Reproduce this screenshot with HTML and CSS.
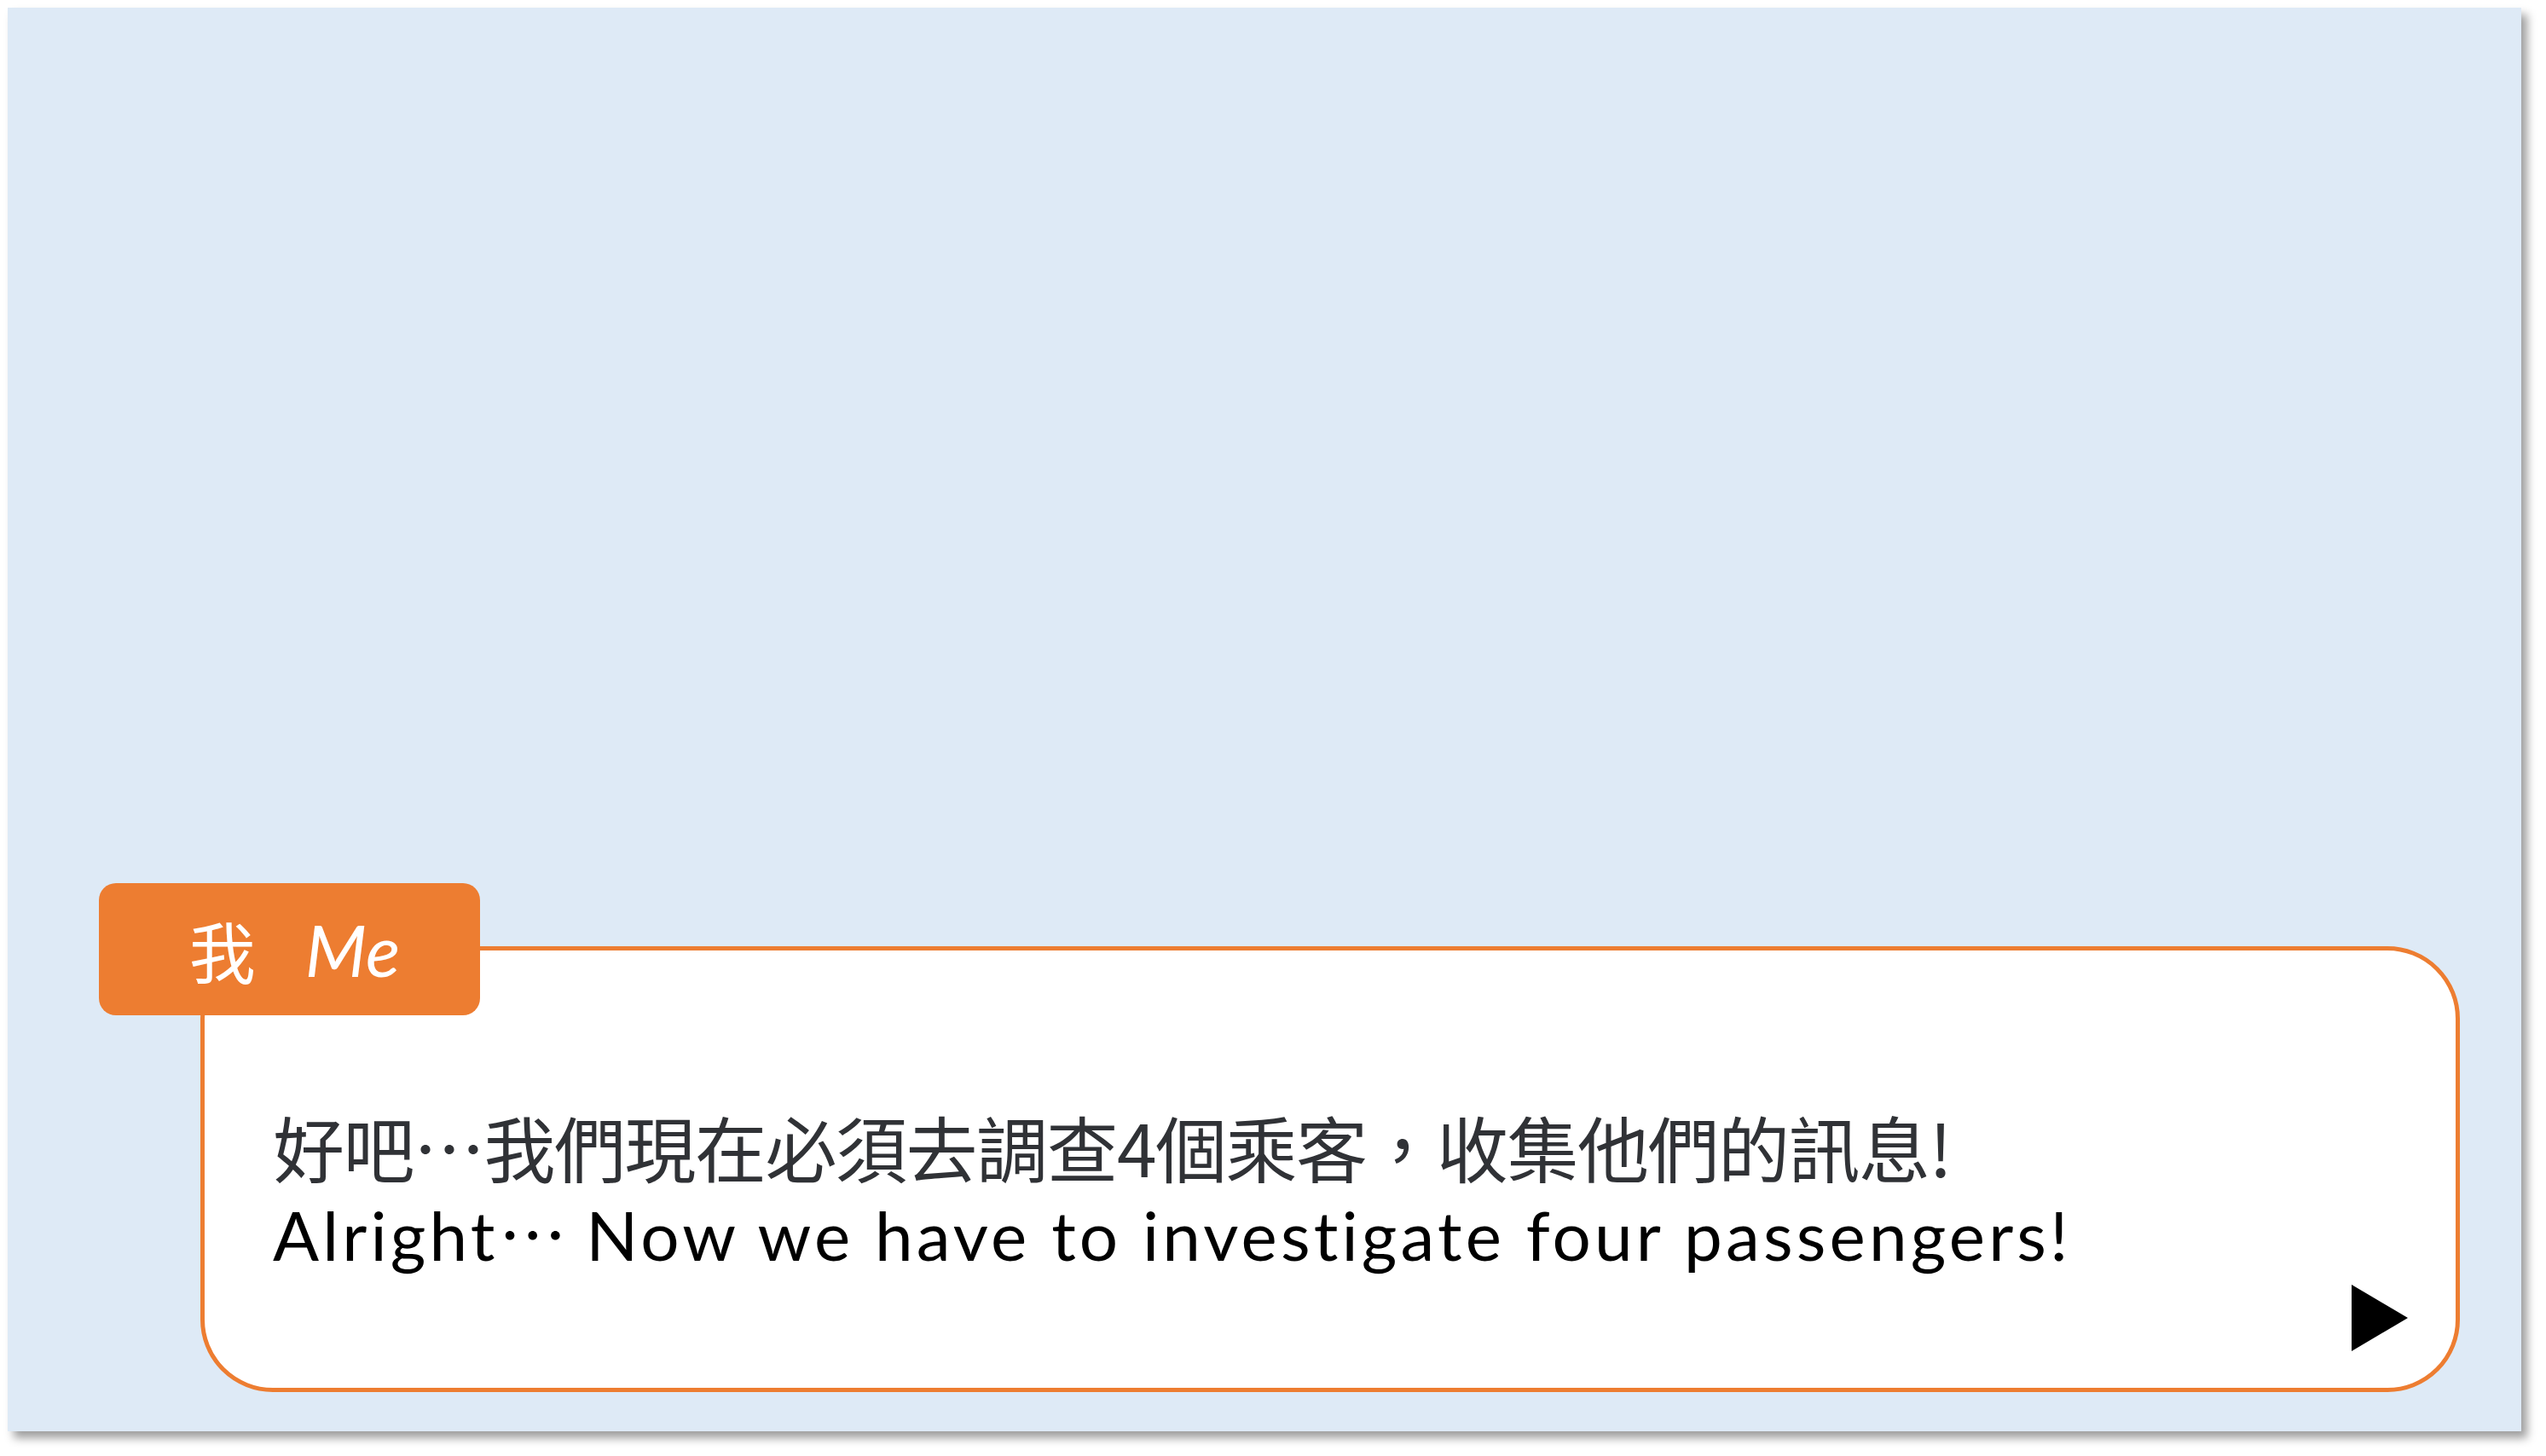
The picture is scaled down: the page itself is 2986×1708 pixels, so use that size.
FILE: index.html
```html
<!DOCTYPE html>
<html lang="zh-Hant">
<head>
<meta charset="utf-8">
<title>Dialogue</title>
<link rel="stylesheet" href="styles.css">
</head>
<body>
<div class="slide">
  <div class="dialog">
    <div class="name-tag"><span class="tag-zh">我</span><span class="tag-en">Me</span></div>
    <div class="lines">
      <p class="line-zh">好吧…我們現在必須去調查4個乘客，收集他們的訊息!</p>
      <p class="line-en">Alright<span class="dots">…</span> Now we have to investigate four passengers!</p>
    </div>
    <svg class="next" width="66" height="78" viewBox="0 0 66 78"><polygon points="0,0 66,39 0,78" fill="#000"/></svg>
  </div>
</div>
</body>
</html>
```

FILE: styles.css
```css
html, body {
  margin: 0;
  padding: 0;
  background: #ffffff;
}
body {
  width: 2986px;
  height: 1708px;
  overflow: hidden;
}
.slide {
  margin: 9px 0 0 9px;
  width: 2948px;
  height: 1670px;
  box-sizing: border-box;
  background: #deeaf6;
  box-shadow: 7px 8px 10px rgba(0, 0, 0, 0.38);
  display: flex;
  flex-direction: column;
  justify-content: flex-end;
  padding: 0 72px 46px 226px;
}
.dialog {
  position: relative;
  height: 523px;
  box-sizing: border-box;
  border: 5px solid #ed7d31;
  border-radius: 85px;
  background: #ffffff;
  display: flex;
  flex-direction: column;
  padding: 181px 0 0 80px;
}
.name-tag {
  position: absolute;
  left: -124px;
  top: -79px;
  width: 447px;
  height: 155px;
  border-radius: 20px;
  background: #ed7d31;
  color: #ffffff;
  display: flex;
  align-items: center;
  justify-content: center;
  gap: 56px;
  font-size: 80px;
  padding-left: 12px;
  box-sizing: border-box;
}
.tag-zh {
  font-family: "Noto Sans CJK TC", sans-serif;
  font-size: 78px;
  line-height: 1;
}
.tag-en {
  font-family: "Lato", sans-serif;
  font-style: italic;
  font-size: 84px;
  line-height: 1;
  padding-left: 2px;
}
.lines {
  display: flex;
  flex-direction: column;
}
.lines p {
  margin: 0;
  white-space: nowrap;
}
.line-zh {
  font-family: "Noto Sans CJK TC", sans-serif;
  font-size: 84px;
  line-height: 98px;
  height: 103px;
  color: #303236;
  letter-spacing: -1.5px;
}
.line-en {
  font-family: "Lato", "Noto Sans CJK TC", sans-serif;
  font-size: 80px;
  line-height: 98px;
  height: 98px;
  color: #000000;
  letter-spacing: 4.15px;
  font-variant-ligatures: none;
}
.dots {
  display: inline-block;
  line-height: 1;
  font-family: "Noto Sans CJK TC", sans-serif;
  letter-spacing: -2px;
}
.next {
  display: block;
  margin-top: auto;
  align-self: flex-end;
  margin-right: 56px;
  margin-bottom: 43px;
}
```
